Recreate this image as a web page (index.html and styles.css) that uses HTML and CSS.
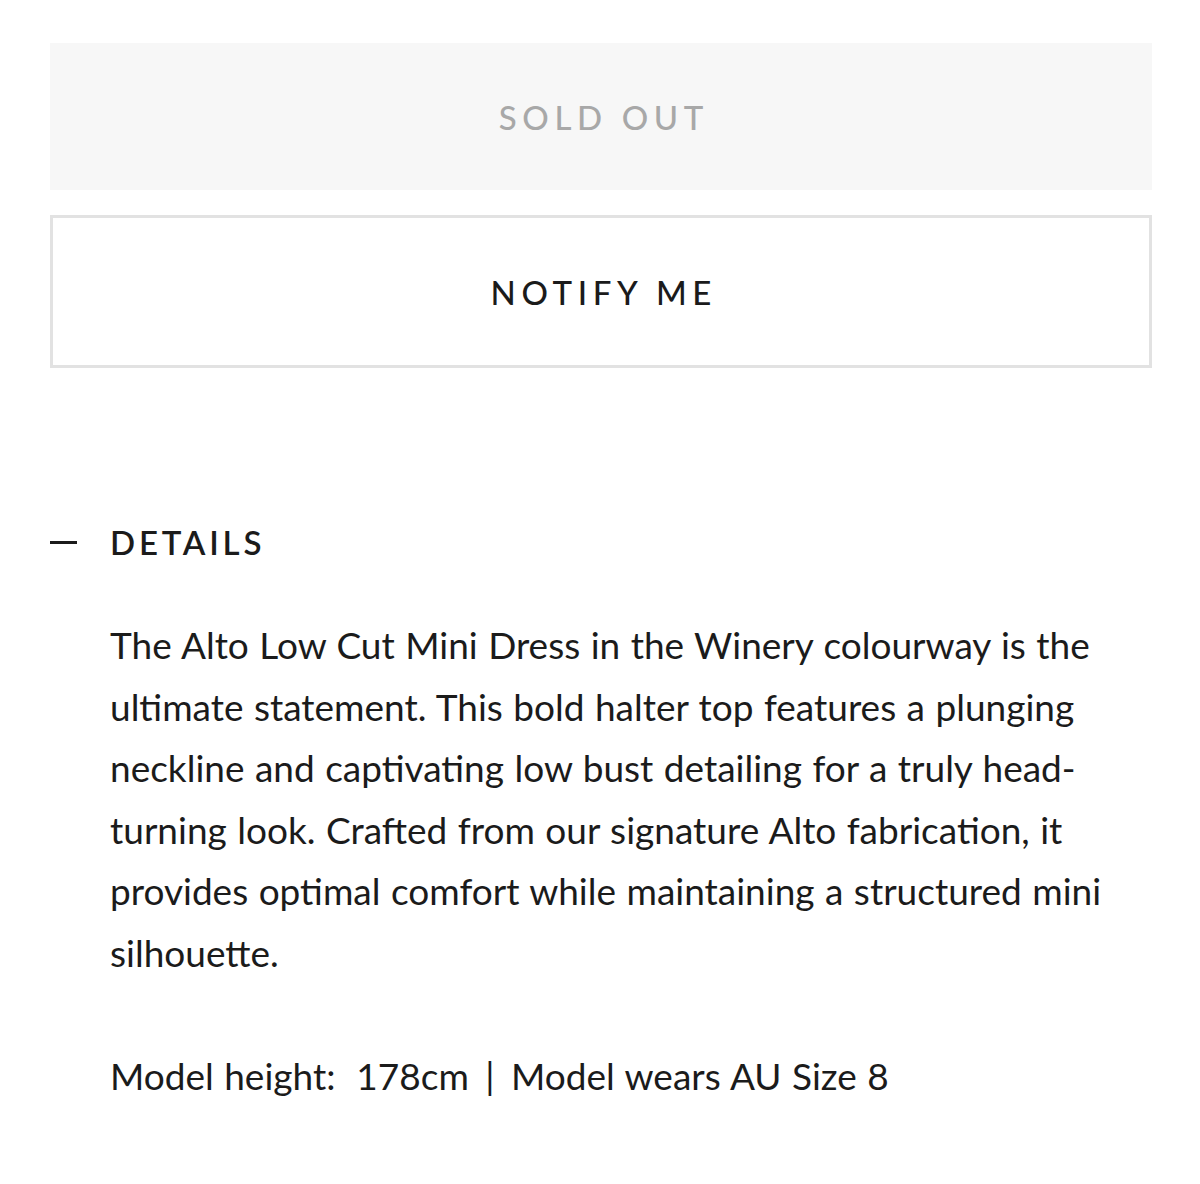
FILE: index.html
```html
<!DOCTYPE html>
<html lang="en">
<head>
<meta charset="utf-8">
<title>Alto Low Cut Mini Dress</title>
<link rel="stylesheet" href="styles.css">
</head>
<body>
<div class="product">
  <div class="actions">
    <button class="btn btn-sold" disabled>SOLD OUT</button>
    <button class="btn btn-notify">NOTIFY ME</button>
  </div>
  <section class="details">
    <div class="details-head">
      <span class="dash"></span>
      <span class="details-title">DETAILS</span>
    </div>
    <div class="details-body">
      <p>The Alto Low Cut Mini Dress in the Winery colourway is the ultimate statement. This bold halter top features a plunging neckline and captivating low bust detailing for a truly head-turning look. Crafted from our signature Alto fabrication, it provides optimal comfort while maintaining a structured mini silhouette.</p>
      <p class="fit">Model height:&nbsp; 178cm <span class="sep">|</span> Model wears AU Size 8</p>
    </div>
  </section>
</div>
</body>
</html>
```
FILE: styles.css
```css
html, body {
  margin: 0;
  padding: 0;
  background: #ffffff;
}
body {
  font-family: "Lato", "Noto Sans", sans-serif;
  color: #1b1b1b;
}
.product {
  padding: 43px 48px 0 50px;
}
.actions {
  display: flex;
  flex-direction: column;
  gap: 25px;
}
.btn {
  display: flex;
  align-items: center;
  justify-content: center;
  width: 100%;
  font-family: inherit;
  font-size: 33px;
  font-weight: 500;
  letter-spacing: 0.17em;
  padding: 0 0 0 0.17em;
  margin: 0;
  cursor: pointer;
}
.btn-sold {
  height: 147px;
  background: #f7f7f7;
  border: none;
  color: #a8a8a8;
}
.btn-notify {
  height: 153px;
  background: #ffffff;
  border: 3px solid #e2e2e2;
  color: #1b1b1b;
}
.details {
  margin-top: 154px;
}
.details-head {
  display: flex;
  align-items: center;
  height: 40px;
  gap: 33px;
}
.dash {
  display: block;
  width: 27px;
  height: 3px;
  background: #1b1b1b;
}
.details-title {
  font-size: 33px;
  font-weight: 600;
  letter-spacing: 0.115em;
}
.details-body {
  margin-top: 52px;
  padding-left: 60px;
  font-size: 37px;
  line-height: 61.5px;
  word-spacing: 1px;
}
.details-body p {
  margin: 0 0 61.5px;
}
.sep {
  padding: 0 6px;
}
```
